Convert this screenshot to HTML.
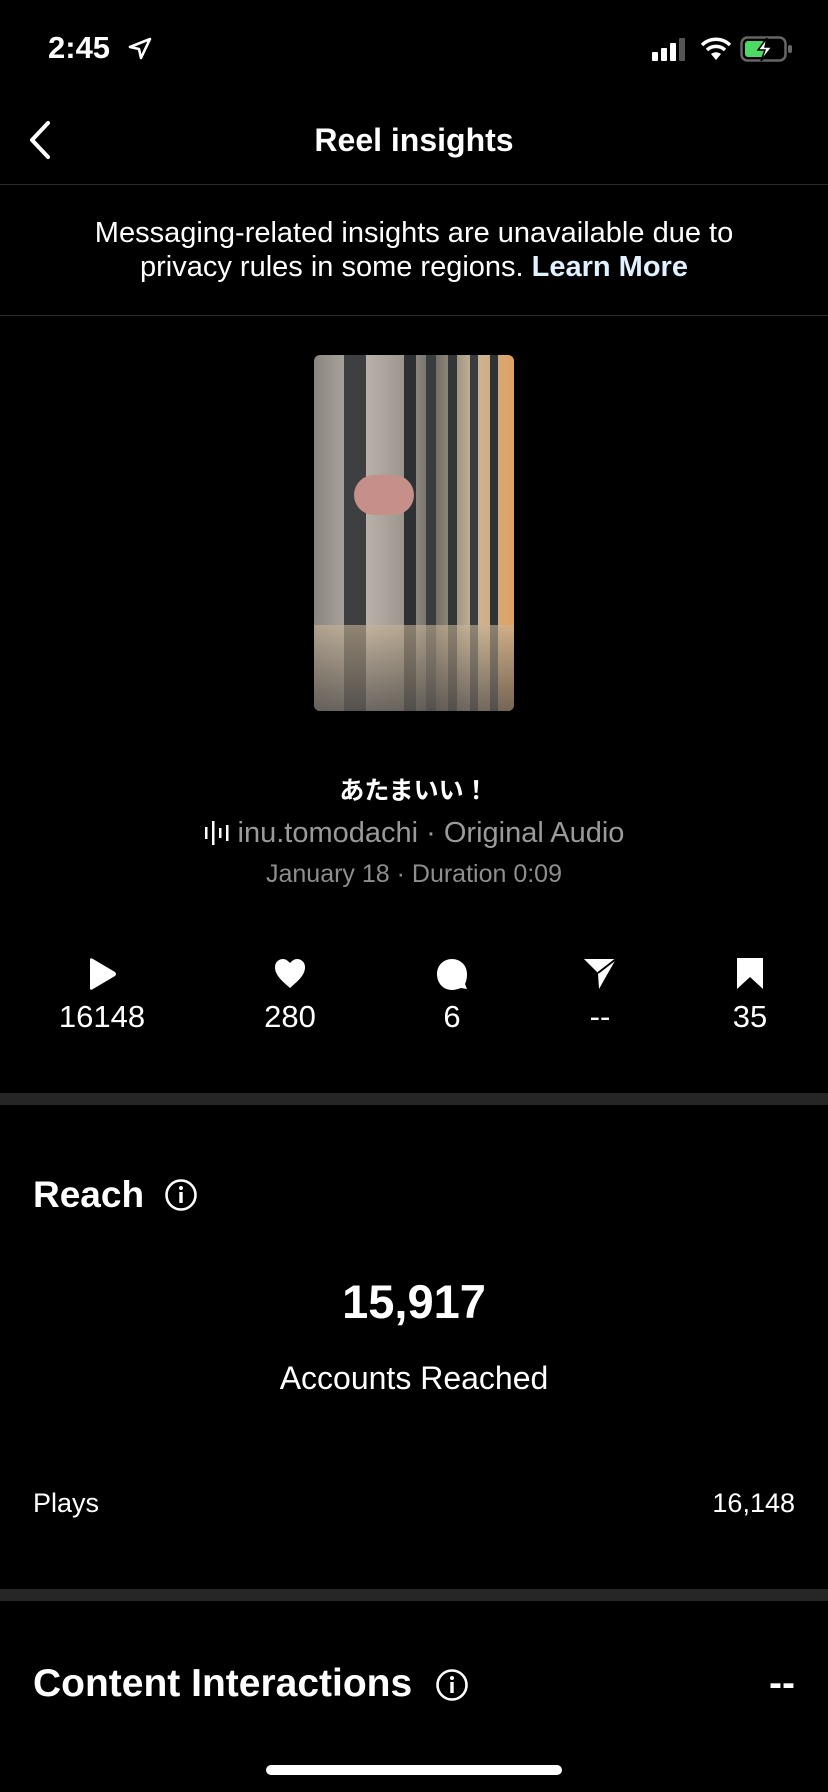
<!DOCTYPE html>
<html><head><meta charset="utf-8"><style>
*{margin:0;padding:0;box-sizing:border-box}
body{width:828px;height:1792px;background:#000;color:#fff;font-family:"Liberation Sans","Noto Sans CJK JP",sans-serif;position:relative;overflow:hidden}
.a{position:absolute}
.c{left:0;width:828px;text-align:center}
.sep{position:absolute;left:0;width:828px;height:1px;background:#2a2a2a}
.band{position:absolute;left:0;width:828px;height:12px;background:#262626}
.stat{position:absolute;top:957px;width:120px;text-align:center;font-size:31px}
.stat svg{display:block;margin:0 auto 8px}
</style></head><body>
<div class="a" style="left:48px;top:30px;font-size:31px;font-weight:600">2:45</div>
<svg class="a" style="left:127px;top:36px" width="26" height="26" viewBox="0 0 26 26"><path d="M23 3 L3 11 L12 13 L14 22 Z" fill="none" stroke="#fff" stroke-width="2.6" stroke-linejoin="round"/></svg>
<svg class="a" style="left:652px;top:38px" width="40" height="24"><rect x="0" y="14" width="6" height="9" rx="1" fill="#fff"/><rect x="9" y="10" width="6" height="13" rx="1" fill="#fff"/><rect x="18" y="5" width="6" height="18" rx="1" fill="#fff"/><rect x="27" y="0" width="6" height="23" rx="1" fill="#555"/></svg>
<svg class="a" style="left:700px;top:36px" width="32" height="26" viewBox="0 0 32 26"><path d="M2 9 A20 20 0 0 1 30 9" stroke="#fff" stroke-width="3.5" fill="none"/><path d="M7 14 A13 13 0 0 1 25 14" stroke="#fff" stroke-width="3.5" fill="none"/><path d="M16 24 L11 18 A8 8 0 0 1 21 18 Z" fill="#fff"/></svg>
<svg class="a" style="left:740px;top:36px" width="54" height="26"><rect x="1.5" y="1.5" width="44" height="23" rx="6" fill="none" stroke="#666" stroke-width="2.5"/><rect x="5" y="5" width="20" height="16" rx="3" fill="#4cd964"/><rect x="48" y="9" width="4" height="8" rx="2" fill="#666"/><path d="M27 2 L18 14 L25 14 L21 25 L32 11 L25 11 Z" fill="#fff" stroke="#000" stroke-width="1.5"/></svg>

<svg class="a" style="left:24px;top:120px" width="28" height="40"><path d="M24 3 L8 20 L24 37" fill="none" stroke="#fff" stroke-width="4" stroke-linecap="round" stroke-linejoin="round"/></svg>
<div class="a c" style="top:122px;font-size:32px;font-weight:700">Reel insights</div>
<div class="sep" style="top:184px"></div>
<div class="a c" style="top:216px;font-size:29px;line-height:34px">Messaging-related insights are unavailable due to<br>privacy rules in some regions. <b style="color:#e0f1ff">Learn More</b></div>
<div class="sep" style="top:315px"></div>

<div class="a" style="left:314px;top:355px;width:200px;height:356px;border-radius:6px;overflow:hidden;background:linear-gradient(90deg,#8a8580 0%,#b9b3ab 25%,#9c968e 45%,#6e6a64 60%,#c7b59a 80%,#e0a060 100%)">
<div class="a" style="left:30px;top:0;width:22px;height:356px;background:#3d3f40"></div>
<div class="a" style="left:90px;top:0;width:12px;height:356px;background:#2e3133"></div>
<div class="a" style="left:112px;top:0;width:10px;height:356px;background:#3a3d3e"></div>
<div class="a" style="left:134px;top:0;width:9px;height:356px;background:#34373a"></div>
<div class="a" style="left:156px;top:0;width:8px;height:356px;background:#3a3d40"></div>
<div class="a" style="left:176px;top:0;width:8px;height:356px;background:#303335"></div>
<div class="a" style="left:40px;top:120px;width:60px;height:40px;border-radius:20px;background:#c68f8a"></div>
<div class="a" style="left:0;top:270px;width:200px;height:86px;background:linear-gradient(180deg,rgba(200,180,150,.6),rgba(90,85,80,.8))"></div>
</div>

<div class="a c" style="top:771px;font-size:25px;font-weight:700">あたまいい！</div>
<div class="a c" style="top:817px;font-size:29px;color:#9a9a9a"><svg width="26" height="24" style="vertical-align:-3px;margin-right:8px"><rect x="1" y="6" width="2.5" height="12" fill="#fff"/><rect x="8" y="0" width="2.5" height="24" fill="#fff"/><rect x="15" y="7" width="2.5" height="10" fill="#fff"/><rect x="22" y="4" width="2.5" height="16" fill="#fff"/></svg>inu.tomodachi · Original Audio</div>
<div class="a c" style="top:860px;font-size:25px;color:#8e8e8e">January 18 · Duration 0:09</div>

<div class="stat" style="left:42px"><svg width="32" height="34"><path d="M4 3 Q4 0 7 2 L29 15 Q31 17 29 19 L7 32 Q4 34 4 31 Z" fill="#fff"/></svg>16148</div>
<div class="stat" style="left:230px"><svg width="34" height="34"><path d="M17 31 C8 23 2 18 2 10 C2 5 6 2 10 2 C13 2 15 4 17 6 C19 4 21 2 24 2 C28 2 32 5 32 10 C32 18 26 23 17 31Z" fill="#fff"/></svg>280</div>
<div class="stat" style="left:392px"><svg width="34" height="34"><path d="M17 2 C25 2 32 8 32 17 C32 22 31 25 30 27 L32 32 L26 31 C23 32 20 33 17 33 C8 33 2 26 2 17 C2 8 9 2 17 2Z" fill="#fff"/></svg>6</div>
<div class="stat" style="left:540px"><svg width="34" height="34"><path d="M1 2 L33 2 L16 32 L15 16 Z" fill="#fff"/><path d="M15 16 L33 2" stroke="#000" stroke-width="2"/></svg>--</div>
<div class="stat" style="left:690px"><svg width="30" height="34"><path d="M2 1 L28 1 L28 32 L15 20 L2 32 Z" fill="#fff"/></svg>35</div>

<div class="band" style="top:1093px"></div>
<div class="a" style="left:33px;top:1174px;font-size:37px;font-weight:700">Reach</div>
<svg class="a" style="left:164px;top:1178px" width="34" height="34"><circle cx="17" cy="17" r="14.5" fill="none" stroke="#fff" stroke-width="2.6"/><rect x="15.3" y="14" width="3.4" height="11" fill="#fff"/><circle cx="17" cy="10" r="2" fill="#fff"/></svg>
<div class="a c" style="top:1274px;font-size:47px;font-weight:700">15,917</div>
<div class="a c" style="top:1360px;font-size:32px">Accounts Reached</div>
<div class="a" style="left:33px;top:1488px;font-size:27px">Plays</div>
<div class="a" style="right:33px;top:1488px;font-size:27px">16,148</div>
<div class="band" style="top:1589px"></div>
<div class="a" style="left:33px;top:1662px;font-size:39px;font-weight:700">Content Interactions</div>
<svg class="a" style="left:435px;top:1668px" width="34" height="34"><circle cx="17" cy="17" r="14.5" fill="none" stroke="#fff" stroke-width="2.6"/><rect x="15.3" y="14" width="3.4" height="11" fill="#fff"/><circle cx="17" cy="10" r="2" fill="#fff"/></svg>
<div class="a" style="right:33px;top:1662px;font-size:39px;font-weight:700">--</div>
<div class="a" style="left:266px;top:1765px;width:296px;height:10px;border-radius:5px;background:#fff"></div>
</body></html>
